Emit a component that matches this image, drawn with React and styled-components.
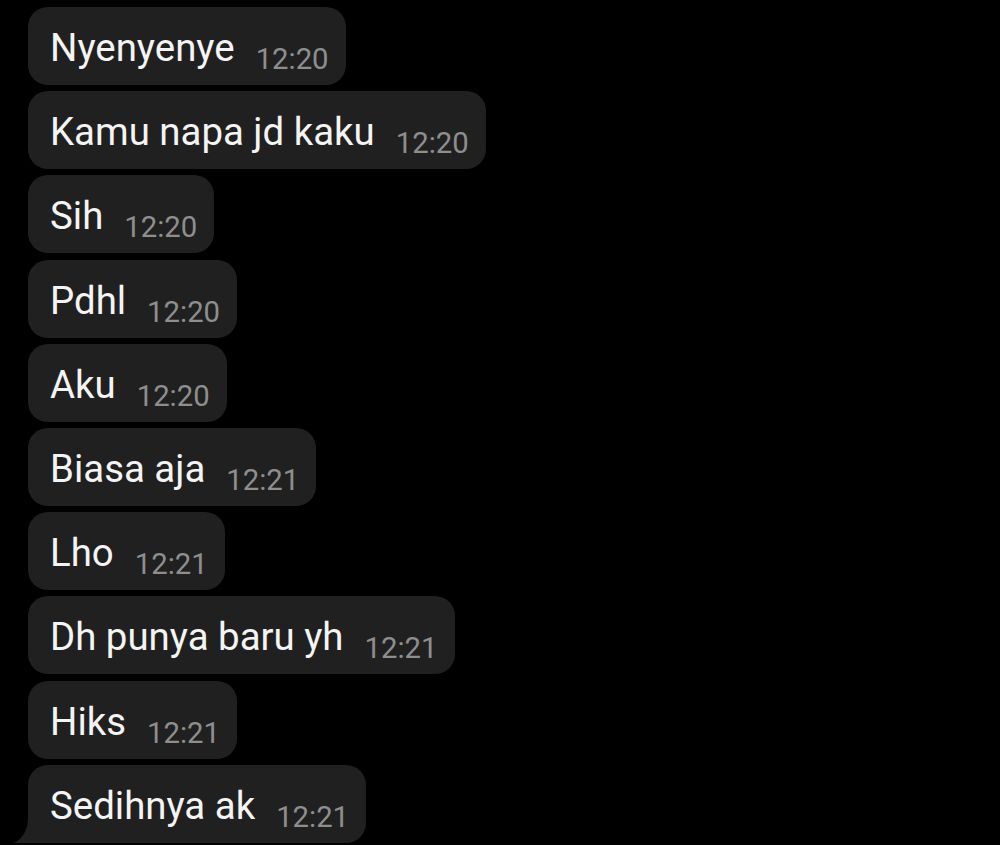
import React from "react";
import styled, { createGlobalStyle } from "styled-components";

const GlobalStyle = createGlobalStyle`
  html, body {
    margin: 0;
    padding: 0;
    background: #000;
  }
  body {
    font-family: Roboto, "Noto Sans", sans-serif;
  }
`;

const messages = [
  { text: "Nyenyenye", time: "12:20" },
  { text: "Kamu napa jd kaku", time: "12:20" },
  { text: "Sih", time: "12:20" },
  { text: "Pdhl", time: "12:20" },
  { text: "Aku", time: "12:20" },
  { text: "Biasa aja", time: "12:21" },
  { text: "Lho", time: "12:21" },
  { text: "Dh punya baru yh", time: "12:21" },
  { text: "Hiks", time: "12:21" },
  { text: "Sedihnya ak", time: "12:21" },
];

const Screen = styled.div`
  width: 1000px;
  height: 845px;
  background: #000;
  overflow: hidden;
  display: flex;
  flex-direction: column;
  align-items: flex-start;
  gap: 6.2px;
  padding: 7px 0 0 28px;
  box-sizing: border-box;
`;

const Bubble = styled.div`
  position: relative;
  height: 78px;
  box-sizing: border-box;
  display: flex;
  align-items: flex-end;
  gap: 21px;
  padding: 0 17px 0 22px;
  background: #202020;
  border-radius: 20px;
  border-bottom-left-radius: ${({ $tail }) => ($tail ? "0" : "20px")};
`;

const Text = styled.span`
  color: #f4f4f4;
  font-size: 38.4px;
  line-height: 38px;
  padding-bottom: 18px;
  white-space: nowrap;
`;

const Time = styled.span`
  color: #8e8e8e;
  font-size: 29.3px;
  line-height: 28px;
  padding-bottom: 12px;
  white-space: nowrap;
`;

const Tail = styled.svg`
  position: absolute;
  left: -14px;
  bottom: 0;
  width: 16px;
  height: 26px;
`;

export default function App() {
  return (
    <>
      <GlobalStyle />
      <Screen>
        {messages.map((m, i) => {
          const last = i === messages.length - 1;
          return (
            <Bubble key={i} $tail={last}>
              {last && (
                <Tail viewBox="0 0 16 26">
                  <path d="M14 0 L16 0 L16 26 L0 26 C8 22 14 14 14 0 Z" fill="#202020" />
                </Tail>
              )}
              <Text>{m.text}</Text>
              <Time>{m.time}</Time>
            </Bubble>
          );
        })}
      </Screen>
    </>
  );
}
